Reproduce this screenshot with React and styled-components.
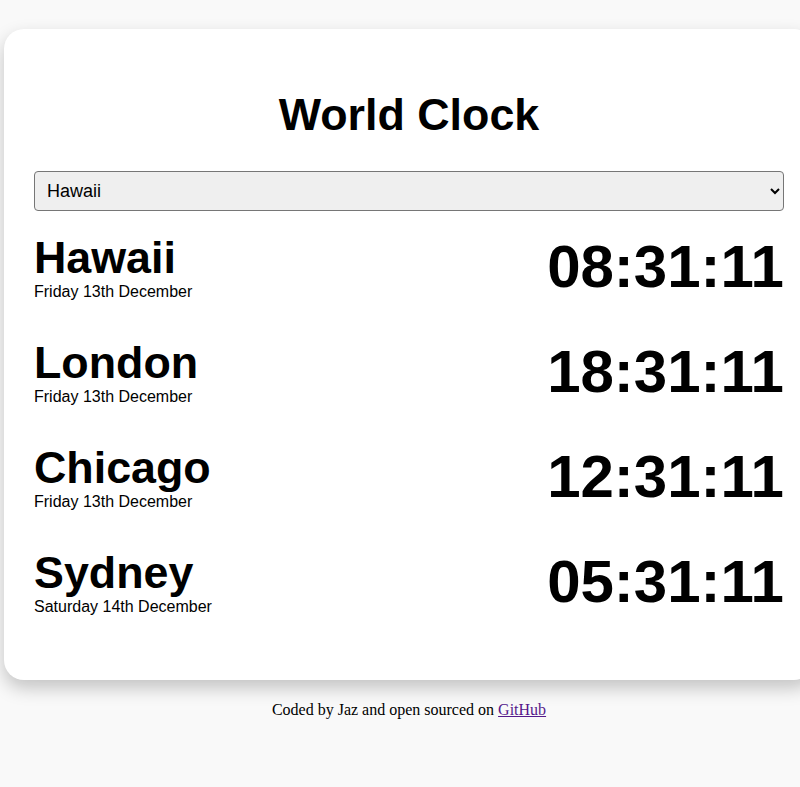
import { useState } from "react";
import styled, { createGlobalStyle } from "styled-components";

const cities = [
  { name: "Hawaii", date: "Friday 13th December", time: "08:31:11" },
  { name: "London", date: "Friday 13th December", time: "18:31:11" },
  { name: "Chicago", date: "Friday 13th December", time: "12:31:11" },
  { name: "Sydney", date: "Saturday 14th December", time: "05:31:11" },
];

const App = () => {
  const [selected, setSelected] = useState("Hawaii");

  return (
    <>
      <GlobalStyle />
      <Page>
        <Card>
          <Title>World Clock</Title>
          <CitySelect value={selected} onChange={(e) => setSelected(e.target.value)}>
            {cities.map((city) => (
              <option key={city.name} value={city.name}>
                {city.name}
              </option>
            ))}
          </CitySelect>
          {cities.map((city) => (
            <CityRow key={city.name}>
              <div>
                <CityName>{city.name}</CityName>
                <CityDate>{city.date}</CityDate>
              </div>
              <CityTime>{city.time}</CityTime>
            </CityRow>
          ))}
        </Card>
        <Footer>
          Coded by Jaz and open sourced on <a href="#github">GitHub</a>
        </Footer>
      </Page>
    </>
  );
};

const GlobalStyle = createGlobalStyle`
body{
  margin:0;
  background:#f9f9f9;
  font-family:"Liberation Serif", serif;
  overflow:hidden;
}
`;

const Page = styled.div`
width:810px;
margin:29px 0 0 4px;
`;

const Card = styled.div`
background:#fff;
border-radius:20px;
padding:30px 30px 28px;
box-shadow:0 8px 18px rgba(0,0,0,0.22);
font-family:"Liberation Sans", Arial, sans-serif;
`;

const Title = styled.h1`
font-size:44.8px;
margin:30px 0 31px;
text-align:center;
`;

const CitySelect = styled.select`
display:block;
width:100%;
height:40px;
font-size:18px;
font-family:"Liberation Sans", Arial, sans-serif;
padding:0 8px;
margin-bottom:21px;
background:#efefef;
border:1px solid #767676;
border-radius:4px;
color:#000;
`;

const CityRow = styled.div`
display:flex;
justify-content:space-between;
align-items:center;
padding-bottom:36px;
`;

const CityName = styled.h2`
font-size:44.8px;
font-weight:bold;
margin:0;
`;

const CityDate = styled.div`
font-size:16px;
`;

const CityTime = styled.div`
font-size:60px;
font-weight:bold;
`;

const Footer = styled.div`
text-align:center;
font-size:16px;
margin-top:21px;
a{
  color:#551a8b;
}
`;

export default App;
